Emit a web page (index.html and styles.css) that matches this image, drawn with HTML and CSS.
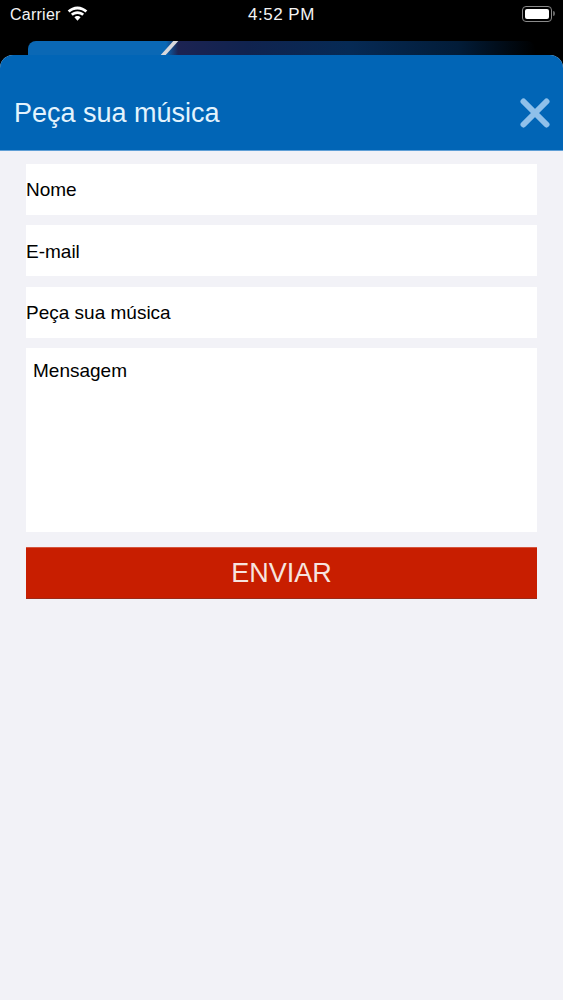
FILE: index.html
```html
<!DOCTYPE html>
<html lang="pt">
<head>
<meta charset="utf-8">
<title>Peça sua música</title>
<link rel="stylesheet" href="styles.css">
</head>
<body>
<div class="status">
  <div class="status-left">
    <span class="carrier">Carrier</span>
    <svg class="wifi" width="21" height="16" viewBox="0 0 21 16"><path d="M10.5 3.400c3 0 5.800 1.200 7.900 3.200l1.900-2C17.700 2 14.300.4 10.500.4S3.300 2 .7 4.600l1.900 2c2.100-2 4.900-3.200 7.900-3.200z" fill="#fff"/><path d="M10.500 8c1.800 0 3.400.7 4.700 1.800l1.900-2c-1.800-1.600-4.100-2.600-6.600-2.600s-4.800 1-6.600 2.600l1.900 2C7.100 8.700 8.700 8 10.500 8z" fill="#fff"/><path d="M10.500 10c-1.200 0-2.300.5-3.100 1.200l3.100 3.600 3.100-3.600c-.8-.7-1.900-1.200-3.100-1.200z" fill="#fff"/></svg>
  </div>
  <span class="clock">4:52 PM</span>
  <div class="battery"><span class="battery-level"></span></div>
</div>
<div class="back-card"><span class="stripe"></span></div>
<main class="sheet">
  <header class="sheet-head">
    <h1 class="sheet-title">Peça sua música</h1>
    <svg class="close" width="32" height="30" viewBox="0 0 32 30"><path d="M4.500 3.500l23 23M27.500 3.500l-23 23" stroke="#8fc0ea" stroke-width="6" stroke-linecap="round" fill="none"/></svg>
  </header>
  <form class="form">
    <div class="field">Nome</div>
    <div class="field field-email">E-mail</div>
    <div class="field field-song">Peça sua música</div>
    <div class="message">Mensagem</div>
    <div class="send">ENVIAR</div>
  </form>
</main>
</body>
</html>
```
FILE: styles.css
```css
* { box-sizing: border-box; }
html, body { margin: 0; padding: 0; }
body {
  width: 563px;
  height: 1000px;
  overflow: hidden;
  background: #000;
  font-family: "Liberation Sans", Arial, sans-serif;
  color: #000;
}
.status {
  height: 41px;
  position: relative;
  display: flex;
  align-items: flex-start;
  justify-content: space-between;
  padding: 5px 11px 0 10px;
  color: #f4f4f4;
}
.status-left { display: flex; align-items: flex-start; gap: 6px; }
.carrier { font-size: 16px; line-height: 20px; letter-spacing: 0.25px; }
.wifi { margin-top: 1px; }
.clock {
  position: absolute;
  left: 248px;
  top: 5px;
  font-size: 17px;
  line-height: 20px;
  letter-spacing: 0.5px;
}
.battery {
  width: 30px;
  height: 16px;
  margin-top: 1px;
  border: 1.500px solid #8a8a8a;
  border-radius: 4px;
  padding: 2px;
  position: relative;
}
.battery::after {
  content: "";
  position: absolute;
  right: -4px;
  top: 4px;
  width: 2px;
  height: 5px;
  background: #666;
  border-radius: 0 2px 2px 0;
}
.battery-level { display: block; height: 100%; background: #fff; border-radius: 2px; }
.back-card {
  height: 14px;
  margin: 0 28px;
  border-radius: 8px 8px 0 0;
  position: relative;
  overflow: hidden;
  background: linear-gradient(90deg, #0a68b5 0, #0a68b5 138px, #1c2352 150px, #10234f 220px, #062a55 320px, #021c38 430px, #000 508px);
}
.stripe {
  position: absolute;
  left: 139px;
  top: 0;
  width: 5px;
  height: 14px;
  background: #d8d8dc;
  transform: skewX(-42deg);
}
.sheet {
  height: 945px;
  background: #f2f2f7;
  border-radius: 13px 13px 0 0;
  overflow: hidden;
}
.sheet-head {
  height: 96px;
  background: #0165b6;
  border-bottom: 1px solid #5f9fd6;
  display: flex;
  align-items: flex-end;
  justify-content: space-between;
  padding: 0 12px 21px 14px;
}
.sheet-title {
  margin: 0;
  font-size: 27px;
  line-height: 32px;
  font-weight: 400;
  color: #e3f3fd;
}
.close { margin-bottom: 1px; }
.form {
  display: flex;
  flex-direction: column;
  padding: 13px 26px 0;
}
.field {
  height: 51px;
  background: #fff;
  font-size: 19px;
  line-height: 52px;
  margin-bottom: 10px;
}
.field-email { line-height: 54px; }
.field-song { margin-top: 1px; }
.message {
  height: 184px;
  background: #fff;
  font-size: 19px;
  line-height: 22px;
  padding: 12px 7px;
}
.send {
  height: 52px;
  margin-top: 15px;
  background: #c81e00;
  border-top: 1px solid #d4553f;
  border-bottom: 1px solid #9c2a18;
  color: #f6e4df;
  font-size: 27px;
  line-height: 50px;
  text-align: center;
}
```
